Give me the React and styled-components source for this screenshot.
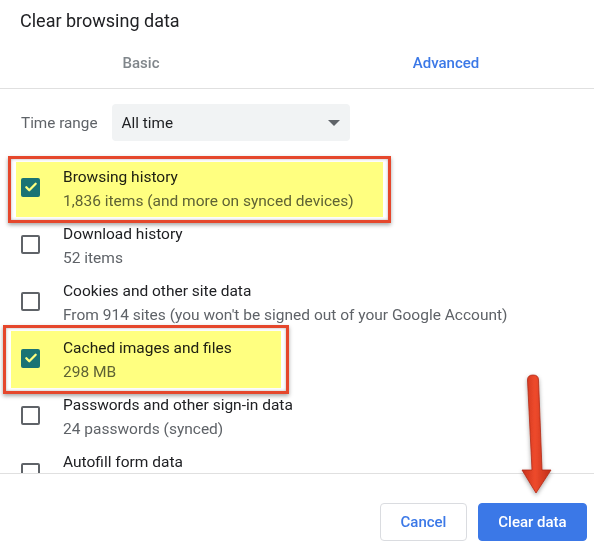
import React from "react";
import styled, { createGlobalStyle } from "styled-components";

const Global = createGlobalStyle`
  html, body { margin: 0; padding: 0; background: #fff; }
  body { font-family: Roboto, "Noto Sans", Arial, sans-serif; -webkit-font-smoothing: antialiased; }
`;

const Dialog = styled.div`
  position: relative;
  width: 594px;
  height: 547px;
  display: flex;
  flex-direction: column;
  overflow: hidden;
  background: #fff;
`;

const Title = styled.h1`
  margin: 0;
  padding: 8px 20px 0;
  height: 28px;
  font-size: 18px;
  font-weight: 400;
  line-height: 26px;
  color: #202124;
`;

const Tabs = styled.div`
  display: grid;
  grid-template-columns: 282px 1fr;
  margin-right: -16px;
  height: 52px;
  border-bottom: 1px solid #e0e0e0;
`;

const Tab = styled.div`
  display: flex;
  align-items: center;
  justify-content: center;
  padding-top: 2px;
  font-size: 15px;
  font-weight: 500;
  color: ${(p) => (p.$active ? "#3b78e7" : "#80868b")};
`;

const Body = styled.div`
  flex: none;
  height: 385px;
  overflow: hidden;
  border-bottom: 1px solid #e0e0e0;
  padding-top: 15px;
  box-sizing: border-box;
`;

const RangeRow = styled.div`
  display: flex;
  align-items: center;
  gap: 14px;
  padding-left: 21px;
  margin-bottom: 19px;
`;

const RangeLabel = styled.span`
  font-size: 15.3px;
  color: #5f6368;
`;

const Select = styled.div`
  display: flex;
  align-items: center;
  justify-content: space-between;
  width: 238px;
  height: 37px;
  box-sizing: border-box;
  padding: 0 10px;
  border-radius: 4px;
  background: #f1f3f4;
  font-size: 15.3px;
  color: #202124;
`;

const Caret = styled.span`
  width: 0;
  height: 0;
  border-left: 6px solid transparent;
  border-right: 6px solid transparent;
  border-top: 6px solid #5f6368;
`;

const Row = styled.div`
  position: relative;
  display: flex;
  align-items: center;
  height: 57px;
  padding-left: 21px;
  gap: 23px;
`;

const Box = styled.span`
  flex: none;
  width: 19px;
  height: 19px;
  box-sizing: border-box;
  border-radius: 2px;
  margin-top: -3px;
  display: flex;
  align-items: center;
  justify-content: center;
  border: ${(p) => (p.$on ? "none" : "2px solid #5f6368")};
  background: ${(p) => (p.$on ? "#1a73e8" : "transparent")};
`;

const Texts = styled.div`
  display: flex;
  flex-direction: column;
`;

const Label = styled.span`
  font-size: 15.5px;
  line-height: 24px;
  color: #202124;
  white-space: nowrap;
`;

const Sub = styled.span`
  font-size: 15.5px;
  line-height: 24px;
  color: #5f6368;
  white-space: nowrap;
`;

/* highlighter annotation laid over a row */
const Marker = styled.div`
  position: absolute;
  left: ${(p) => p.$left}px;
  top: ${(p) => p.$top}px;
  width: ${(p) => p.$w}px;
  height: ${(p) => p.$h}px;
  box-sizing: border-box;
  border: 3px solid #e5472c;
  box-shadow: 0 2px 4px rgba(0, 0, 0, 0.35), inset 0 0 3px rgba(0, 0, 0, 0.3);
  padding: 3px 5px;
  mix-blend-mode: multiply;
  pointer-events: none;
`;

const Fill = styled.div`
  width: 100%;
  height: 100%;
  background: #ffff80;
`;

const Footer = styled.div`
  flex: 1;
  display: flex;
  justify-content: flex-end;
  align-items: flex-start;
  gap: 11px;
  padding: 29px 7px 0 0;
`;

const Button = styled.button`
  height: 38px;
  padding: 0 19px;
  border-radius: 4px;
  font-family: inherit;
  font-size: 15px;
  font-weight: 500;
  cursor: pointer;
  border: 1px solid ${(p) => (p.$primary ? "#3b78e7" : "#dadce0")};
  background: ${(p) => (p.$primary ? "#3b78e7" : "#fff")};
  color: ${(p) => (p.$primary ? "#fff" : "#3b78e7")};
  min-width: ${(p) => (p.$primary ? "109px" : "87px")};
`;

const Arrow = styled.svg`
  position: absolute;
  left: 515px;
  top: 370px;
  width: 45px;
  height: 135px;
  overflow: visible;
`;

const Check = () => (
  <svg width="14" height="14" viewBox="0 0 24 24">
    <path d="M4 12.5l5 5L20 6.5" fill="none" stroke="#fff" strokeWidth="4" strokeLinecap="round" strokeLinejoin="round" />
  </svg>
);

const items = [
  { label: "Browsing history", sub: "1,836 items (and more on synced devices)", on: true, mark: { left: 8, top: -4, w: 383, h: 67 } },
  { label: "Download history", sub: "52 items" },
  { label: "Cookies and other site data", sub: "From 914 sites (you won't be signed out of your Google Account)" },
  { label: "Cached images and files", sub: "298 MB", on: true, mark: { left: 3, top: -6, w: 286, h: 69 } },
  { label: "Passwords and other sign-in data", sub: "24 passwords (synced)" },
  { label: "Autofill form data", sub: "" },
];

export default function App() {
  return (
    <>
      <Global />
      <Dialog>
        <Title>Clear browsing data</Title>
        <Tabs>
          <Tab>Basic</Tab>
          <Tab $active>Advanced</Tab>
        </Tabs>
        <Body>
          <RangeRow>
            <RangeLabel>Time range</RangeLabel>
            <Select>
              <span>All time</span>
              <Caret />
            </Select>
          </RangeRow>
          {items.map((it) => (
            <Row key={it.label}>
              <Box $on={it.on}>{it.on && <Check />}</Box>
              <Texts>
                <Label>{it.label}</Label>
                <Sub>{it.sub || "\u00a0"}</Sub>
              </Texts>
              {it.mark && (
                <Marker $left={it.mark.left} $top={it.mark.top} $w={it.mark.w} $h={it.mark.h}>
                  <Fill />
                </Marker>
              )}
            </Row>
          ))}
        </Body>
        <Footer>
          <Button>Cancel</Button>
          <Button $primary>Clear data</Button>
        </Footer>
        <Arrow viewBox="0 0 45 135">
          <defs>
            <linearGradient id="shaft" x1="0" x2="1" y1="0" y2="0">
              <stop offset="0" stopColor="#c7321c" />
              <stop offset="0.45" stopColor="#ee4a2c" />
              <stop offset="1" stopColor="#c02e18" />
            </linearGradient>
            <filter id="drop" x="-50%" y="-20%" width="200%" height="140%">
              <feDropShadow dx="0" dy="2" stdDeviation="2" floodColor="#000" floodOpacity="0.35" />
            </filter>
          </defs>
          <path
            d="M12.5 10 Q12.5 5 18 5 Q23.5 5 23.5 10 L27 100 L36 100 L21 123 L7 100 L17 100 Z"
            fill="url(#shaft)"
            stroke="#b02a15"
            strokeWidth="0.8"
            strokeLinejoin="round"
            filter="url(#drop)"
          />
        </Arrow>
      </Dialog>
    </>
  );
}
